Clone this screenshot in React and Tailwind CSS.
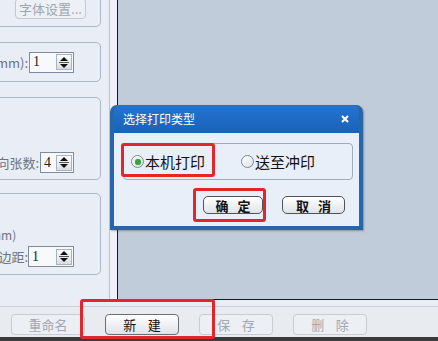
import React from "react";

const CJK = "font-['Noto_Sans_CJK_SC','Liberation_Sans',sans-serif]";

// spin box with up/down arrows
function Spin({ value, className }) {
  return (
    <div className={`flex h-[21px] items-center justify-between border border-[#7d8ba1] bg-[#f8f9fb] pl-[3px] pr-[1px] ${className}`}>
      <span className="font-['Liberation_Serif',serif] text-[14px] leading-none text-[#222]">{value}</span>
      <div className="flex h-[16px] w-[16px] items-center justify-center border border-[#a9b2bf] bg-gradient-to-b from-[#fbfbfb] to-[#d9dde3]">
        <svg width="10" height="13" viewBox="0 0 10 13">
          <path d="M5 1 L9 5 L1 5 Z" fill="#111" />
          <rect x="0" y="6" width="10" height="1" fill="#555" />
          <path d="M1 8 L9 8 L5 12 Z" fill="#111" />
        </svg>
      </div>
    </div>
  );
}

function Radio({ checked }) {
  return (
    <div className="flex h-[13px] w-[13px] items-center justify-center rounded-full border border-[#7b8798] bg-gradient-to-br from-[#ffffff] to-[#dde2e8]">
      {checked && <div className="h-[6px] w-[6px] rounded-full bg-[#36a23a] shadow-[0_0_2px_#7fd47f]" />}
    </div>
  );
}

function ToolBtn({ children, enabled }) {
  return (
    <div
      className={`flex h-[21px] w-[74px] items-center justify-center rounded-[4px] border text-[13px] leading-none ${
        enabled
          ? "border-[#6b6f75] bg-gradient-to-b from-[#ffffff] to-[#dfe3e8] text-[#111]"
          : "border-[#c8cdd5] bg-[#eceff3] text-[#a1a8b2]"
      }`}
    >
      <span className="whitespace-pre">{children}</span>
    </div>
  );
}

export default function App() {
  return (
    <div className={`relative flex h-[341px] w-[438px] flex-col overflow-hidden bg-[#e9edf5] ${CJK}`}>
      {/* top area */}
      <div className="flex h-[300px]">
        {/* left settings panel */}
        <div className="flex w-[110px] flex-col overflow-hidden border-r border-[#b9c2d0] bg-[#e9edf5]">
          <div className="-ml-[20px] flex w-[121px] flex-col">
            {/* groupbox 1 */}
            <div className="-mt-[10px] flex h-[37px] items-end rounded-[5px] border border-[#aab5c8] pb-[7px] pl-[34px]">
              <div className="flex h-[21px] w-[71px] items-center justify-center rounded-[4px] border border-[#c2c9d3] bg-[#edf0f4] text-[13px] leading-none text-[#9ea6b1]">
                字体设置...
              </div>
            </div>
            {/* groupbox 2 */}
            <div className="mt-[15px] flex h-[40px] items-center rounded-[5px] border border-[#aab5c8] pl-[6px]">
              <span className="w-[42px] whitespace-nowrap pr-[1px] text-right text-[13px] leading-none text-[#6c7480]">(mm):</span>
              <Spin value="1" className="w-[45px]" />
            </div>
            {/* groupbox 3 */}
            <div className="mt-[15px] flex h-[83px] items-end rounded-[5px] border border-[#aab5c8] pb-[6px] pl-[6px]">
              <span className="w-[53px] whitespace-nowrap pb-[4px] pr-[1px] text-right text-[13px] leading-none text-[#6c7480]">向张数:</span>
              <Spin value="4" className="w-[34px]" />
            </div>
            {/* groupbox 4 */}
            <div className="mt-[13px] flex h-[82px] flex-col justify-end rounded-[5px] border border-[#aab5c8] pb-[7px] pl-[6px]">
              <span className="mb-[5px] pl-[3px] text-[12px] leading-none text-[#6c7480]">mm)</span>
              <div className="flex items-center">
                <span className="w-[41px] text-right text-[13px] leading-none text-[#6c7480]">边距:</span>
                <Spin value="1" className="w-[46px]" />
              </div>
            </div>
          </div>
        </div>
        <div className="w-[7px] bg-[#eef1f7]" />
        {/* preview area */}
        <div className="flex-1 border-b border-l border-[#1a1a1a] bg-[#c0ccd9]" />
      </div>

      {/* bottom toolbar */}
      <div className="h-[7px] border-b border-[#c9cfd8] bg-[#e9edf5]" />
      <div className="flex h-[30px] items-start gap-[20px] bg-[#e8ebf0] pl-[11px] pt-[7px]">
        <ToolBtn>重命名</ToolBtn>
        <ToolBtn enabled>{"新    建"}</ToolBtn>
        <ToolBtn>{"保    存"}</ToolBtn>
        <ToolBtn>{"删    除"}</ToolBtn>
      </div>
      <div className="flex-1 bg-[#3a3a3a]" />

      {/* dialog */}
      <div className="absolute left-[110px] top-[105px] flex h-[125px] w-[253px] flex-col rounded-t-[7px] bg-[#2a65aa] px-[4px] pb-[4px] shadow-[1px_1px_2px_rgba(0,0,0,0.3)]">
        <div className="flex h-[28px] items-center justify-between rounded-t-[6px] bg-gradient-to-b from-[#2374d0] to-[#1a62b8] pl-[9px] pr-[10px] text-[12px] text-white">
          <span>选择打印类型</span>
          <svg width="8" height="8" viewBox="0 0 8 8">
            <path d="M1 1 L7 7 M7 1 L1 7" stroke="#fff" strokeWidth="2" />
          </svg>
        </div>
        <div className="flex flex-1 flex-col bg-[#e9eff8] pl-[9px] pr-[6px] pt-[10px]">
          <div className="flex h-[37px] items-center rounded-[4px] border border-[#9eabc0] pl-[7px]">
            <Radio checked />
            <span className="ml-[1px] text-[15px] leading-none text-[#111]">本机打印</span>
            <div className="ml-[36px]">
              <Radio />
            </div>
            <span className="ml-[1px] text-[15px] leading-none text-[#111]">送至冲印</span>
          </div>
          <div className="mt-[16px] flex gap-[19px] pl-[80px]">
            <div className="flex h-[18px] w-[60px] items-center justify-center rounded-[5px] border border-[#4f5358] bg-gradient-to-b from-[#ffffff] to-[#dfe3e8] text-[13px] font-bold leading-none text-[#111]">
              <span className="whitespace-pre">{"确   定"}</span>
            </div>
            <div className="flex h-[18px] w-[63px] items-center justify-center rounded-[5px] border border-[#4f5358] bg-gradient-to-b from-[#ffffff] to-[#dfe3e8] text-[13px] font-bold leading-none text-[#111]">
              <span className="whitespace-pre">{"取   消"}</span>
            </div>
          </div>
        </div>
      </div>

      {/* red annotation boxes */}
      <div className="absolute left-[121px] top-[143px] h-[34px] w-[94px] rounded-[3px] border-[3px] border-[#e3262b]" />
      <div className="absolute left-[193px] top-[188px] h-[34px] w-[73px] rounded-[3px] border-[3px] border-[#e3262b]" />
      <div className="absolute left-[80px] top-[299px] h-[40px] w-[135px] rounded-[3px] border-[3px] border-[#e3262b]" />
    </div>
  );
}
